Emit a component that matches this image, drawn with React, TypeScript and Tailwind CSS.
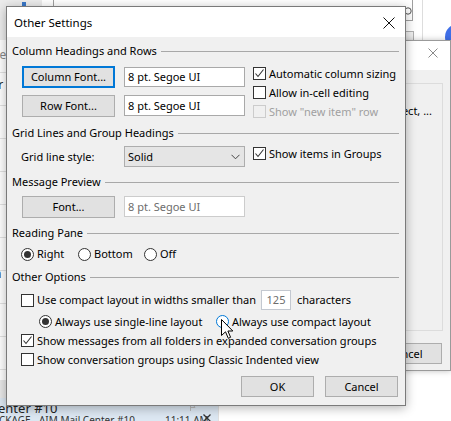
import React from "react";

const F = "font-['Noto_Sans',sans-serif]";

function Check({ checked = false, disabled = false }: { checked?: boolean; disabled?: boolean }) {
  return (
    <span
      className={`w-[13px] h-[13px] border flex items-center justify-center shrink-0 ${
        disabled ? "border-[#cccccc] bg-[#f0f0f0]" : "border-[#333333] bg-white"
      }`}
    >
      {checked && (
        <svg width="11" height="11" viewBox="0 0 11 11">
          <path d="M1.5 5.5 L4 8.5 L9.5 1.5" stroke="#333" strokeWidth="1.1" fill="none" />
        </svg>
      )}
    </span>
  );
}

function Radio({ checked = false, hover = false }: { checked?: boolean; hover?: boolean }) {
  return (
    <span
      className={`w-[13px] h-[13px] rounded-full border bg-white flex items-center justify-center shrink-0 ${
        hover ? "border-[#0078d7]" : "border-[#333333]"
      }`}
    >
      {checked && <span className="w-[7px] h-[7px] rounded-full bg-[#333333]" />}
    </span>
  );
}

function Heading({ children, mt }: { children: React.ReactNode; mt: string }) {
  return (
    <div className={`flex items-center h-[16px] pr-[6px] ${mt}`}>
      <span className="whitespace-nowrap">{children}</span>
      <span className="flex-1 ml-[4px] h-px bg-[#a8a8a8]" />
    </div>
  );
}

function Btn({ children, focus = false, w = "w-[93px]", h = "h-[22px]" }: { children: React.ReactNode; focus?: boolean; w?: string; h?: string }) {
  return (
    <div
      className={`${w} ${h} bg-[#e1e1e1] flex items-center justify-center shrink-0 ${
        focus ? "border-2 border-[#0078d7]" : "border border-[#adadad]"
      }`}
    >
      {children}
    </div>
  );
}

function CheckRow({ children, checked, disabled }: { children: React.ReactNode; checked?: boolean; disabled?: boolean }) {
  return (
    <div className="h-[19px] flex items-center">
      <Check checked={checked} disabled={disabled} />
      <span className={`ml-[3px] whitespace-nowrap ${disabled ? "text-[#a0a0a0]" : ""}`}>{children}</span>
    </div>
  );
}

export default function App() {
  return (
    <div className={`relative w-[451px] h-[421px] overflow-hidden bg-white text-black ${F} text-[11px] leading-[16px]`}>
      {/* background: top-left toolbar area */}
      <div className="absolute left-0 top-0 w-[42px] h-[40px] bg-[#ececec]" />
      <div className="absolute left-[22px] top-[2px] w-[4px] h-[4px] bg-[#3a78c8]" />
      {/* search box */}
      <div className="absolute left-[53px] top-[-12px] w-[360px] h-[33px] border border-[#a0a0a0] bg-white" />
      <svg className="absolute left-[403px] top-[7px]" width="9" height="10" viewBox="0 0 9 10">
        <circle cx="5" cy="4" r="3.2" stroke="#555" strokeWidth="1" fill="none" />
        <path d="M2.8 6.3 L0.5 9" stroke="#555" strokeWidth="1.2" />
      </svg>
      <div className="absolute left-[404px] top-[31px] w-[10px] h-[10px] border border-[#b0b0b0] bg-[#f0f0f0]" />
      <div className="absolute left-[422px] top-0 w-px h-[40px] bg-[#dddddd]" />
      <div className="absolute left-[445px] top-[24px] w-[26px] h-[26px] rounded-full bg-[#3f6fe8]" />
      {/* right edge marks */}
      <div className="absolute left-[449px] top-[74px] w-[2px] h-[3px] bg-[#222]" />
      <div className="absolute left-[449px] top-[121px] w-[2px] h-[3px] bg-[#222]" />
      <div className="absolute left-[449px] top-[142px] w-[2px] h-[3px] bg-[#22a8d8]" />
      <div className="absolute left-[449px] top-[171px] w-[2px] h-[3px] bg-[#d83aa0]" />
      <div className="absolute left-[449px] top-[200px] w-[2px] h-[20px] bg-[#e8d23a]" />
      <div className="absolute left-[449px] top-[235px] w-[2px] h-[3px] bg-[#222]" />

      {/* left list rows */}
      <div className="absolute left-0 top-[40px] w-[6px] flex flex-col">
        {[0, 1, 2, 3, 4, 5, 6, 7, 8, 9].map((i) => (
          <div key={i} className="h-[33px] border-b border-[#e2e2e2]" />
        ))}
      </div>
      <div className="absolute left-[-8px] top-[49px] text-[12px] text-[#888] leading-[12px]">ne</div>
      <div className="absolute left-[-6px] top-[79px] text-[12px] text-[#222] leading-[12px]">tr</div>
      <div className="absolute left-[-6px] top-[268px] text-[12px] text-[#222] leading-[12px]">n</div>
      <div className="absolute left-0 top-[380px] w-[6px] h-[25px] bg-[#e8e8e8]" />

      {/* bottom list item */}
      <div className="absolute left-0 top-[398px] w-[218px] h-[23px] bg-[#dce7f2]">
        <div className="absolute left-[-2px] top-[5px] text-[13px] leading-[11px] text-[#222] whitespace-nowrap">enter #10</div>
        <div className="absolute left-[-1px] top-[19px] text-[10px] leading-[7px] text-[#333] whitespace-nowrap">CKAGE - AIM Mail Center #10</div>
        <div className="absolute left-[165px] top-[19px] text-[10px] leading-[7px] text-[#333] whitespace-nowrap">11:11 AM</div>
        <svg className="absolute left-[190px] top-[6px]" width="6" height="7" viewBox="0 0 6 7">
          <path d="M0.5 0 V7 M0.5 0.5 H5 L4 2 L5 3.5 H0.5" stroke="#bbb" fill="none" />
        </svg>
        <svg className="absolute left-[203px] top-[16px]" width="8" height="8" viewBox="0 0 8 8">
          <path d="M0.5 0.5 L7.5 7.5 M7.5 0.5 L0.5 7.5" stroke="#333" strokeWidth="1.3" />
        </svg>
      </div>
      <div className="absolute left-[218px] top-[398px] w-px h-[23px] bg-[#e0e0e0]" />

      {/* background dialog */}
      <div className="absolute left-[300px] top-[40px] w-[151px] h-[331px] border border-[#9a9a9a] bg-[#f0f0f0] shadow-[0_0_6px_rgba(0,0,0,0.25)] flex flex-col">
        <div className="h-[29px] bg-white flex items-start justify-end pr-[12px] pt-[7px]">
          <svg width="10" height="10" viewBox="0 0 10 10">
            <path d="M0.5 0.5 L9.5 9.5 M9.5 0.5 L0.5 9.5" stroke="#8a8a8a" strokeWidth="1" />
          </svg>
        </div>
        <div className="mt-[13px] mr-[7px] h-[248px] border border-[#dcdcdc] relative">
          <span className="absolute right-[10px] top-[19px] whitespace-nowrap">Subject, ...</span>
        </div>
        <div className="mt-[12px] mr-[8px] self-end w-[73px] h-[21px] bg-[#e1e1e1] border border-[#adadad] flex items-center justify-center">
          Cancel
        </div>
      </div>

      {/* main dialog */}
      <div className="absolute left-[6px] top-[6px] w-[400px] h-[400px] border border-[#7a7a7a] bg-[#f0f0f0] shadow-[0_2px_10px_rgba(0,0,0,0.3)] flex flex-col">
        {/* title bar */}
        <div className="h-[30px] bg-white flex items-center justify-between pl-[7px] pr-[10px] shrink-0">
          <span className="text-[11.5px] mt-[1px]">Other Settings</span>
          <svg width="12" height="12" viewBox="0 0 12 12" className="mt-[1px]">
            <path d="M0.5 0.5 L11.5 11.5 M11.5 0.5 L0.5 11.5" stroke="#111" strokeWidth="1" />
          </svg>
        </div>

        <div className="flex flex-col pl-[5px]">
          {/* Section 1 */}
          <Heading mt="mt-[6px]">Column Headings and Rows</Heading>
          <div className="mt-[5px] pl-[10px] flex items-start">
            <div className="w-[223px] mt-[2px] flex flex-col">
              <div className="flex items-start">
                <Btn focus>Column Font...</Btn>
                <div className="ml-[9px] mt-[1px] w-[121px] h-[20px] bg-white border border-[#a9a9a9] flex items-center pl-[3px]">
                  8 pt. Segoe UI
                </div>
              </div>
              <div className="flex items-start mt-[7px]">
                <Btn>Row Font...</Btn>
                <div className="ml-[9px] w-[121px] h-[21px] bg-white border border-[#a9a9a9] flex items-center pl-[3px]">
                  8 pt. Segoe UI
                </div>
              </div>
            </div>
            <div className="ml-[8px] flex flex-col">
              <CheckRow checked>Automatic column sizing</CheckRow>
              <CheckRow>Allow in-cell editing</CheckRow>
              <CheckRow disabled>Show "new item" row</CheckRow>
            </div>
          </div>

          {/* Section 2 */}
          <Heading mt="mt-[4px]">Grid Lines and Group Headings</Heading>
          <div className="mt-[3px] pl-[9px] flex items-start">
            <span className="w-[103px] mt-[2px] h-[21px] flex items-center whitespace-nowrap">Grid line style:</span>
            <div className="mt-[2px] w-[121px] h-[21px] bg-[#e5e5e5] border border-[#adadad] flex items-center justify-between pl-[3px] pr-[4px]">
              <span>Solid</span>
              <svg width="9" height="6" viewBox="0 0 9 6">
                <path d="M0.5 0.8 L4.5 4.8 L8.5 0.8" stroke="#444" strokeWidth="1" fill="none" />
              </svg>
            </div>
            <div className="ml-[8px]">
              <CheckRow checked>Show items in Groups</CheckRow>
            </div>
          </div>

          {/* Section 3 */}
          <Heading mt="mt-[7px]">Message Preview</Heading>
          <div className="mt-[6px] pl-[10px] flex items-start">
            <Btn>Font...</Btn>
            <div className="ml-[9px] w-[121px] h-[21px] bg-white border border-[#cccccc] text-[#6d6d6d] flex items-center pl-[3px]">
              8 pt. Segoe UI
            </div>
          </div>

          {/* Section 4 */}
          <Heading mt="mt-[7px]">Reading Pane</Heading>
          <div className="mt-[5px] pl-[9px] h-[16px] flex items-center">
            <div className="w-[57px] flex items-center">
              <Radio checked />
              <span className="ml-[3px]">Right</span>
            </div>
            <div className="w-[66px] flex items-center">
              <Radio />
              <span className="ml-[3px]">Bottom</span>
            </div>
            <div className="flex items-center">
              <Radio />
              <span className="ml-[3px]">Off</span>
            </div>
          </div>

          {/* Section 5 */}
          <Heading mt="mt-[7px]">Other Options</Heading>
          <div className="mt-[5px] pl-[9px] h-[20px] flex items-center">
            <Check />
            <span className="ml-[3px] w-[224px] whitespace-nowrap">Use compact layout in widths smaller than</span>
            <div className="w-[30px] h-[20px] bg-white border border-[#c3c8d0] text-[#6d6d6d] flex items-center justify-center">125</div>
            <span className="ml-[6px]">characters</span>
          </div>
          <div className="mt-[2px] pl-[27px] h-[19px] flex items-center">
            <div className="w-[177px] flex items-center">
              <Radio checked />
              <span className="ml-[3px] whitespace-nowrap">Always use single-line layout</span>
            </div>
            <div className="flex items-center">
              <Radio hover />
              <span className="ml-[3px] whitespace-nowrap">Always use compact layout</span>
            </div>
          </div>
          <div className="pl-[9px]">
            <CheckRow checked>Show messages from all folders in expanded conversation groups</CheckRow>
            <CheckRow>Show conversation groups using Classic Indented view</CheckRow>
          </div>

          {/* buttons */}
          <div className="mt-[7px] pr-[7px] flex justify-end gap-[11px]">
            <Btn w="w-[73px]" h="h-[21px]">OK</Btn>
            <Btn w="w-[73px]" h="h-[21px]">Cancel</Btn>
          </div>
        </div>
      </div>

      {/* mouse cursor */}
      <svg className="absolute left-[221px] top-[319px]" width="13" height="21" viewBox="0 0 13 21">
        <path d="M0.5 0.5 L0.5 16.5 L4.5 12.8 L7.3 19.3 L9.6 18.3 L6.9 12 L11.8 12 Z" fill="white" stroke="black" strokeWidth="1" strokeLinejoin="miter" />
      </svg>
    </div>
  );
}
